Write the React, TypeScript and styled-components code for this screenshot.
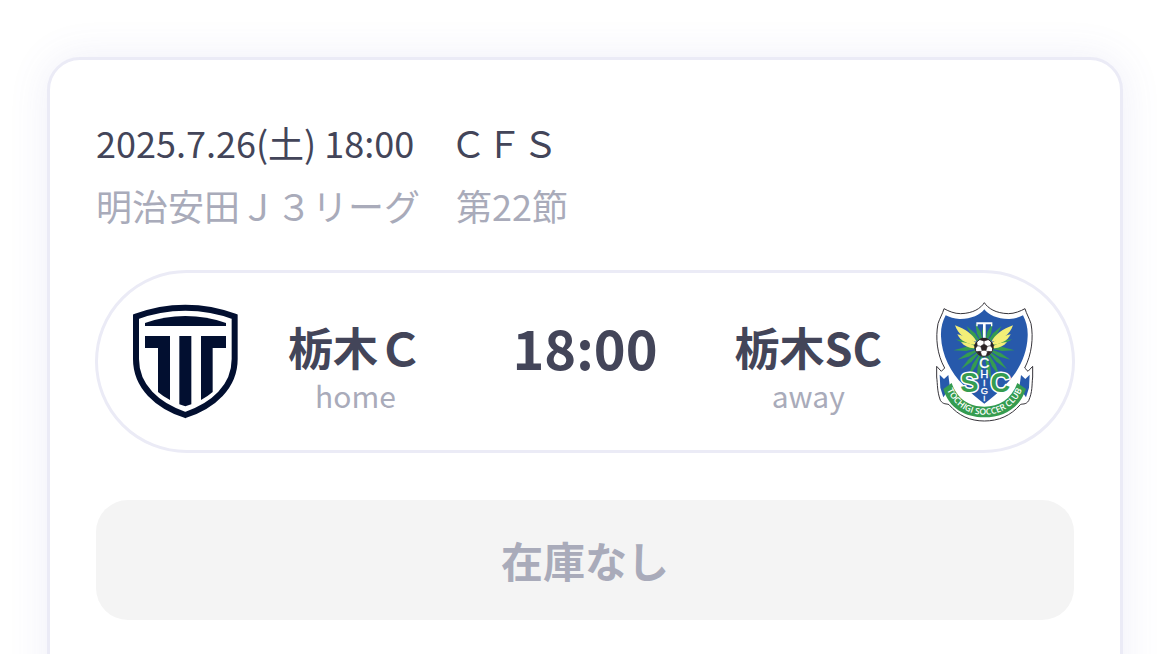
import React from "react";
import styled, { createGlobalStyle } from "styled-components";

const GlobalStyle = createGlobalStyle`
  * { box-sizing: border-box; }
  html { scrollbar-width: none; }
  body {
    margin: 0;
    background: #fff;
    color: #434559;
    font-family: "Noto Sans CJK JP", sans-serif;
  }
`;

const Page = styled.main`
  padding: 57px 34px 48px 47px;
`;

const Card = styled.article`
  padding: 51px 46px 96px;
  border: 3px solid #ebebf6;
  border-radius: 33px;
  background: #fff;
  box-shadow: 0 0 40px rgba(100, 100, 190, 0.1);
`;

const InfoLine = styled.p<{ $muted?: boolean }>`
  margin: 0;
  font-size: 36px;
  line-height: 63px;
  color: ${(p) => (p.$muted ? "#a9abba" : "#434559")};
`;

const Match = styled.section`
  display: grid;
  grid-template-columns: 1fr auto 1fr;
  align-items: center;
  min-height: 183px;
  margin: 33px -1px 47px;
  padding: 0 32px;
  border: 3px solid #ebebf6;
  border-radius: 92px;
`;

const Side = styled.div<{ $away?: boolean }>`
  display: flex;
  flex-direction: ${(p) => (p.$away ? "row-reverse" : "row")};
  align-items: center;
  gap: 48px;
`;

const Emblem = styled.span`
  display: flex;
  justify-content: center;
  width: 110px;
`;

const Team = styled.div`
  display: flex;
  flex-direction: column;
  align-items: center;
  padding-top: 12px;
`;

const TeamName = styled.strong`
  font-size: 45px;
  line-height: 54px;
  font-weight: 700;
`;

const Role = styled.span`
  font-size: 30px;
  line-height: 42px;
  color: #a9abba;
`;

const Kickoff = styled.time`
  padding-bottom: 30px;
  font-size: 54px;
  line-height: 54px;
  font-weight: 700;
`;

const StockButton = styled.button`
  display: block;
  width: 100%;
  height: 120px;
  padding: 0 0 2px;
  border: 0;
  border-radius: 32px;
  background: #f4f4f4;
  color: #a9abba;
  font-family: inherit;
  font-size: 42px;
  font-weight: 700;
`;

const CityLogo = () => (
  <svg width="107" height="115" viewBox="36 27 321 345" role="img" aria-label="栃木Ｃ">
    <path
      d="M48 65Q118 38 196 38Q274 38 344 65V192C344 275 280 332 196 360C112 332 48 275 48 192Z"
      fill="#fff"
      stroke="#020f30"
      strokeWidth="18"
    />
    <path d="M75 84Q133 63 196 63Q260 63 318 84V93H75Z" fill="#020f30" />
    <path d="M75 123H150V315Q130 305 114 291V159H75Z" fill="#020f30" />
    <path d="M178 123H214V328L196 334L178 328Z" fill="#020f30" />
    <path d="M243 123H318V159H278V291Q262 305 243 315Z" fill="#020f30" />
  </svg>
);

const rays: [number, number][] = [
  [0, 76], [20, 76], [40, 82], [75, 88], [96, 92], [116, 88], [134, 96], [152, 104], [168, 108],
  [192, 108], [208, 104], [226, 96], [244, 88], [264, 92], [285, 88], [320, 82], [340, 76],
];

const feathers = [
  "M155 142C144 120 120 104 90 93C99 121 124 138 155 142Z",
  "M155 148C136 131 114 124 97 120C106 140 128 150 154 152Z",
  "M152 157C138 147 122 144 108 143C119 157 135 163 152 161Z",
];

const SoccerClubLogo = () => (
  <svg width="100" height="122" viewBox="30 20 300 366" role="img" aria-label="栃木SC">
    <path
      d="M178 25C189 42 212 57 250 58C269 58 287 50 300 43C304 58 313 72 318 88C326 130 320 181 299 221L309 231L323 216V248C320 275 323 291 311 319C302 333 291 327 286 331C257 364 221 380 178 380C135 380 101 364 72 331C65 327 55 332 46 318C36 290 38 271 35 248V216L49 231L59 221C36 181 31 130 39 88C44 72 53 58 57 43C72 51 88 58 107 58C145 57 167 42 178 25Z"
      fill="#fff"
      stroke="#36343a"
      strokeWidth="3"
    />
    <path
      d="M178 45C190 62 220 75 253 74C270 73 283 69 294 63C304 82 309 102 308 126C306 184 278 236 241 272C223 293 201 310 178 328C155 310 133 293 115 272C78 236 50 184 48 126C47 102 52 82 62 63C73 69 88 73 103 74C136 75 166 62 178 45Z"
      fill="#2759ab"
    />
    <g fill="#359c50">
      {rays.map(([angle, length]) => (
        <path
          key={angle}
          d={`M0 0L6 ${-length * 0.6}L0 ${-length}L-6 ${-length * 0.6}Z`}
          transform={`translate(177 158) rotate(${angle})`}
        />
      ))}
    </g>
    {[undefined, "translate(354 0) scale(-1 1)"].map((flip, i) => (
      <g key={i} transform={flip} fill="#f3ef77">
        {feathers.map((d) => (
          <path key={d} d={d} />
        ))}
      </g>
    ))}
    <path d="M154 84H202V96H198V90H182V132H174V90H158V96H154Z" fill="#fff" />
    <circle cx="177" cy="159" r="27" fill="#fff" stroke="#2b2325" strokeWidth="3" />
    <g fill="#2b2325" stroke="#2b2325" strokeWidth="2">
      <path d="M177 149L187 156L183 168H171L167 156Z" />
      <path d="M165 136L177 140L189 136L183 132H171Z" />
      <path d="M199 144L197 155L204 163L205 151Z" />
      <path d="M155 144L157 155L150 163L149 151Z" />
      <path d="M188 171L199 172L191 182L184 184Z" />
      <path d="M166 171L155 172L163 182L170 184Z" />
      <path d="M177 149V139M187 156L197 154M183 168L188 174M171 168L166 174M167 156L157 154" />
    </g>
    <path d="M44 241L57 254L70 242L75 280L55 309L46 280Z" fill="#2759ab" />
    <path d="M314 241L301 254L288 242L283 280L303 309L312 280Z" fill="#2759ab" />
    <path
      d="M80 266C97 315 134 337 178 337C222 337 259 315 277 266L303 284C284 342 236 369 178 369C120 369 72 342 55 284Z"
      fill="#359c50"
    />
    <g
      fontFamily="'Liberation Sans', sans-serif"
      fontWeight="700"
      fontSize="82"
      textAnchor="middle"
      fill="#359c50"
      stroke="#fff"
      strokeWidth="9"
      strokeLinejoin="round"
      paintOrder="stroke"
    >
      <text x="133" y="293">S</text>
      <text x="226" y="293">C</text>
    </g>
    <g fontFamily="'Liberation Sans', sans-serif" textAnchor="middle" fill="#fff" stroke="#fff">
      <text x="178" y="221" fontSize="42">C</text>
      <text x="178" y="251" fontSize="34">H</text>
      <text x="178" y="275" fontSize="28">I</text>
      <text x="178" y="300" fontSize="28">G</text>
      <text x="178" y="320" fontSize="22">I</text>
    </g>
    <path id="club-ribbon" d="M61 274C82 333 127 361 178 361C229 361 276 333 296 274" fill="none" />
    <text
      fontFamily="'Open Sans', sans-serif"
      fontSize="26"
      fontWeight="600"
      fill="#fff"
      textAnchor="middle"
    >
      <textPath href="#club-ribbon" startOffset="50%">TOCHIGI SOCCER CLUB</textPath>
    </text>
  </svg>
);

export default function App() {
  return (
    <>
      <GlobalStyle />
      <Page>
        <Card>
          <InfoLine>2025.7.26(土) 18:00　ＣＦＳ</InfoLine>
          <InfoLine $muted>明治安田Ｊ３リーグ　第22節</InfoLine>
          <Match>
            <Side>
              <Emblem><CityLogo /></Emblem>
              <Team>
                <TeamName>栃木Ｃ</TeamName>
                <Role>home</Role>
              </Team>
            </Side>
            <Kickoff>18:00</Kickoff>
            <Side $away>
              <Emblem><SoccerClubLogo /></Emblem>
              <Team>
                <TeamName>栃木SC</TeamName>
                <Role>away</Role>
              </Team>
            </Side>
          </Match>
          <StockButton type="button">在庫なし</StockButton>
        </Card>
      </Page>
    </>
  );
}
